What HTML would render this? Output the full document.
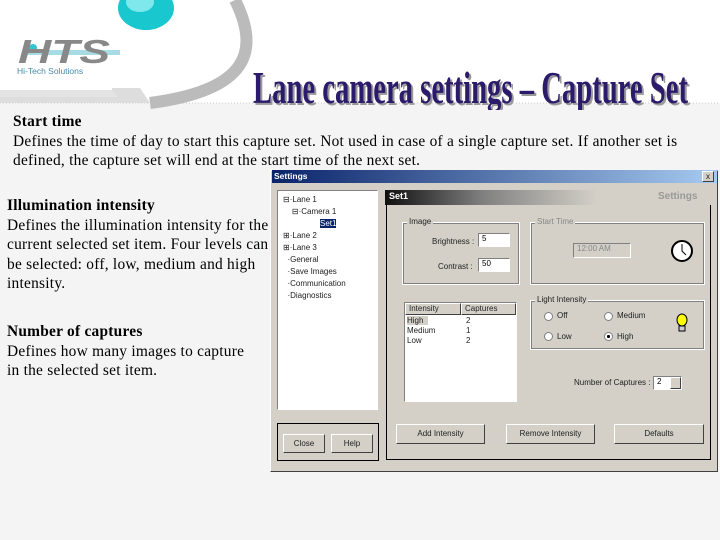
<!DOCTYPE html>
<html><head><meta charset="utf-8"><style>
*{margin:0;padding:0;box-sizing:border-box}
body{width:720px;height:540px;overflow:hidden;background:#f4f4f4;position:relative;font-family:"Liberation Serif",serif;color:#000}
.a{position:absolute}
.s{font-family:"Liberation Sans",sans-serif;font-size:8px;color:#222;white-space:nowrap}
.txt{font-size:15.4px;line-height:19.5px;letter-spacing:0.25px}
.grp{border:1px solid #fff;outline:1px solid #808080;outline-offset:-2px}
.btn{background:#d4d0c8;border:1px solid;border-color:#fff #404040 #404040 #fff;text-align:center;font-family:"Liberation Sans",sans-serif;font-size:8px;color:#222}
.inp{background:#fff;border:1px solid;border-color:#808080 #fff #fff #808080;font-family:"Liberation Sans",sans-serif;font-size:8px;padding-left:3px}
.rad{width:9px;height:9px;border-radius:50%;background:#fff;border:1px solid #808080}
</style></head><body>
<div class="a" style="left:0;top:0;width:720px;height:103px;background:#fff"></div>
<svg class="a" style="left:0;top:0" width="720" height="110">
<path d="M0 103 L720 103" stroke="#ccc" stroke-dasharray="1 2"/>
<path d="M235 0 C260 50 250 90 150 103" fill="none" stroke="#bbb" stroke-width="12"/>
<path d="M95 88 L140 88 L150 103 L0 103 L0 95 Z" fill="#ddd"/>
<rect x="0" y="0" width="112" height="90" fill="#fff"/>
<path d="M0 90 L112 90 L118 97 L0 97 Z" fill="#e4e4e4"/>
<ellipse cx="146" cy="8" rx="28" ry="22" fill="#19c7cf"/>
<ellipse cx="140" cy="2" rx="14" ry="10" fill="#7ee8ec"/>
<circle cx="33" cy="48" r="4" fill="#35c5d0"/>
<rect x="25" y="50" width="95" height="5" fill="#a8dce4"/>
<text x="18" y="63" font-family="Liberation Sans" font-weight="bold" font-style="italic" font-size="33" fill="#888" textLength="92" lengthAdjust="spacingAndGlyphs">HTS</text>
<text x="17" y="74" font-family="Liberation Sans" font-size="8.5" fill="#4a8aa8">Hi-Tech Solutions</text>
<text x="253" y="103" font-family="Liberation Serif" font-weight="bold" font-size="46" fill="#999" textLength="435" lengthAdjust="spacingAndGlyphs" transform="translate(2,2)">Lane camera settings – Capture Set</text>
<text x="253" y="103" font-family="Liberation Serif" font-weight="bold" font-size="46" fill="#2c1b6b" textLength="435" lengthAdjust="spacingAndGlyphs">Lane camera settings – Capture Set</text>
</svg>
<div class="a txt" style="left:13px;top:112px;width:690px"><b>Start time</b><br>Defines the time of day to start this capture set. Not used in case of a single capture set. If another set is<br>defined, the capture set will end at the start time of the next set.</div>
<div class="a txt" style="left:7px;top:196px;width:275px"><b>Illumination intensity</b><br>Defines the illumination intensity for the<br>current selected set item. Four levels can<br>be selected: off, low, medium and high<br>intensity.</div>
<div class="a txt" style="left:7px;top:322px;width:265px"><b>Number of captures</b><br>Defines how many images to capture<br>in the selected set item.</div>
<div class="a" style="left:270px;top:170px;width:448px;height:302px;background:#d4d0c8;border:1px solid;border-color:#fff #404040 #404040 #fff"></div>
<div class="a" style="left:272px;top:170px;width:445px;height:13px;background:linear-gradient(90deg,#0a246a,#a6caf0)"></div>
<div class="a" style="left:274px;top:171px;font:bold 8.5px 'Liberation Sans',sans-serif;color:#fff">Settings</div>
<div class="a btn" style="left:702px;top:171px;width:12px;height:11px;font-size:8px;line-height:9px">x</div>
<div class="a" style="left:277px;top:190px;width:101px;height:220px;background:#fff;border:1px solid;border-color:#808080 #fff #fff #808080"></div>
<div class="a s" style="left:283px;top:194px;line-height:12px">⊟·Lane 1<br>&nbsp;&nbsp;&nbsp;&nbsp;⊟·Camera 1<br><span style="margin-left:37px;background:#0a246a;color:#fff">Set1</span><br>⊞·Lane 2<br>⊞·Lane 3<br>&nbsp;&nbsp;·General<br>&nbsp;&nbsp;·Save Images<br>&nbsp;&nbsp;·Communication<br>&nbsp;&nbsp;·Diagnostics</div>
<div class="a" style="left:277px;top:423px;width:102px;height:38px;border:1px solid #000"></div>
<div class="a btn" style="left:283px;top:434px;width:42px;height:19px;line-height:17px">Close</div>
<div class="a btn" style="left:331px;top:434px;width:42px;height:19px;line-height:17px">Help</div>
<div class="a" style="left:385px;top:190px;width:326px;height:15px;background:linear-gradient(90deg,#101010,#808080 30%,#d4d0c8 65%)"></div>
<div class="a" style="left:389px;top:191px;font:bold 9px 'Liberation Sans',sans-serif;color:#fff">Set1</div>
<div class="a" style="left:658px;top:191px;font:bold 10px 'Liberation Sans',sans-serif;color:#999">Settings</div>
<div class="a" style="left:386px;top:205px;width:325px;height:255px;border:1px solid #000;border-top:none"></div>
<div class="a grp" style="left:402px;top:222px;width:118px;height:63px"></div>
<div class="a s" style="left:407px;top:217px;background:#d4d0c8;padding:0 2px">Image</div>
<div class="a s" style="left:432px;top:237px">Brightness :</div>
<div class="a inp" style="left:478px;top:233px;width:32px;height:14px">5</div>
<div class="a s" style="left:438px;top:262px">Contrast :</div>
<div class="a inp" style="left:478px;top:258px;width:32px;height:14px">50</div>
<div class="a grp" style="left:530px;top:222px;width:175px;height:63px"></div>
<div class="a s" style="left:535px;top:217px;background:#d4d0c8;padding:0 2px;color:#888">Start Time</div>
<div class="a inp" style="left:573px;top:243px;width:58px;height:15px;background:#d4d0c8;color:#888">12:00 AM</div>
<svg class="a" style="left:670px;top:239px" width="24" height="24"><circle cx="12" cy="12" r="10" fill="#fff" stroke="#000" stroke-width="2"/><path d="M12 5V12L16 16" stroke="#000" fill="none"/></svg>
<div class="a" style="left:404px;top:302px;width:113px;height:100px;background:#fff;border:1px solid;border-color:#808080 #fff #fff #808080"></div>
<div class="a btn" style="left:405px;top:303px;width:56px;height:12px;text-align:left;padding-left:3px;line-height:10px">Intensity</div>
<div class="a btn" style="left:461px;top:303px;width:55px;height:12px;text-align:left;padding-left:3px;line-height:10px">Captures</div>
<div class="a s" style="left:407px;top:316px;line-height:10px"><span style="background:#d4d0c8">High&nbsp;&nbsp;</span><br>Medium<br>Low</div>
<div class="a s" style="left:466px;top:316px;line-height:10px">2<br>1<br>2</div>
<div class="a grp" style="left:530px;top:300px;width:175px;height:50px"></div>
<div class="a s" style="left:535px;top:295px;background:#d4d0c8;padding:0 2px">Light Intensity</div>
<div class="a rad" style="left:544px;top:312px"></div><div class="a s" style="left:557px;top:311px">Off</div>
<div class="a rad" style="left:604px;top:312px"></div><div class="a s" style="left:617px;top:311px">Medium</div>
<div class="a rad" style="left:544px;top:332px"></div><div class="a s" style="left:557px;top:332px">Low</div>
<div class="a rad" style="left:604px;top:332px;background:radial-gradient(#000 30%,#fff 35%)"></div><div class="a s" style="left:617px;top:332px">High</div>
<svg class="a" style="left:672px;top:312px" width="20" height="22"><ellipse cx="10" cy="8" rx="5" ry="6" fill="#ff0" stroke="#000"/><rect x="7" y="14" width="6" height="5" fill="#ccc" stroke="#000"/></svg>
<div class="a s" style="left:574px;top:378px">Number of Captures :</div>
<div class="a inp" style="left:653px;top:376px;width:29px;height:14px">2</div>
<div class="a btn" style="left:670px;top:377px;width:11px;height:12px"></div>
<div class="a btn" style="left:396px;top:424px;width:89px;height:20px;line-height:18px">Add Intensity</div>
<div class="a btn" style="left:506px;top:424px;width:89px;height:20px;line-height:18px">Remove Intensity</div>
<div class="a btn" style="left:614px;top:424px;width:90px;height:20px;line-height:18px">Defaults</div>
</body></html>
